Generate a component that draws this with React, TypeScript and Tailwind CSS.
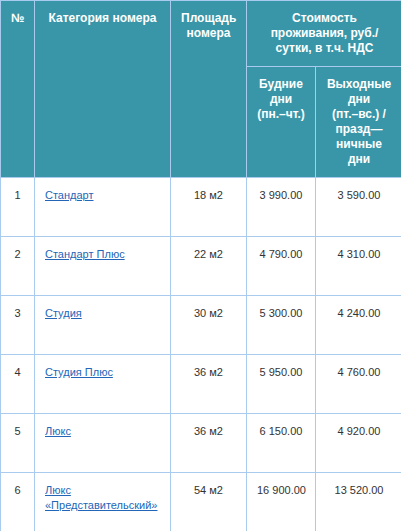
const rows = [
  { n: 1, name: ["Стандарт"], area: "18 м2", weekday: "3 990.00", weekend: "3 590.00" },
  { n: 2, name: ["Стандарт Плюс"], area: "22 м2", weekday: "4 790.00", weekend: "4 310.00" },
  { n: 3, name: ["Студия"], area: "30 м2", weekday: "5 300.00", weekend: "4 240.00" },
  { n: 4, name: ["Студия Плюс"], area: "36 м2", weekday: "5 950.00", weekend: "4 760.00" },
  { n: 5, name: ["Люкс"], area: "36 м2", weekday: "6 150.00", weekend: "4 920.00" },
  { n: 6, name: ["Люкс", "«Представительский»"], area: "54 м2", weekday: "16 900.00", weekend: "13 520.00" },
];

const th = "border border-[#a9cbee] bg-[#3996a8] px-[10px] py-[10px] align-top text-center font-bold text-white text-[12px] leading-[15px]";
const td = "border border-[#a9cbee] px-[10px] pt-[10px] align-top text-[11px] leading-[15px] text-[#333]";

export default function App() {
  return (
    <div className="w-[401px] h-[531px] overflow-hidden bg-white font-['Liberation_Sans',Arial,sans-serif]">
      <table className="w-[402px] table-fixed border-collapse">
        <colgroup>
          <col className="w-[34px]" />
          <col className="w-[136px]" />
          <col className="w-[76px]" />
          <col className="w-[69px]" />
          <col className="w-[87px]" />
        </colgroup>
        <thead>
          <tr className="h-[66px]">
            <th rowSpan={2} className={th}>№</th>
            <th rowSpan={2} className={th}>Категория номера</th>
            <th rowSpan={2} className={th}>Площадь номера</th>
            <th colSpan={2} className={th}>
              Стоимость<br />проживания, руб./<br />сутки, в т.ч. НДС
            </th>
          </tr>
          <tr className="h-[111px]">
            <th className={th}>
              Будние<br />дни<br />(пн.–чт.)
            </th>
            <th className={th}>
              Выходные<br />дни<br />(пт.–вс.) /<br />празд—<br />ничные<br />дни
            </th>
          </tr>
        </thead>
        <tbody>
          {rows.map((r) => (
            <tr key={r.n} className="h-[59px]">
              <td className={`${td} text-center`}>{r.n}</td>
              <td className={td}>
                <a href="#" className="text-[#2366b8] underline">
                  {r.name.map((part, i) => (
                    <span key={i}>
                      {i > 0 && <br />}
                      {part}
                    </span>
                  ))}
                </a>
              </td>
              <td className={`${td} text-center whitespace-nowrap`}>{r.area}</td>
              <td className={`${td} px-0 text-center whitespace-nowrap`}>{r.weekday}</td>
              <td className={`${td} px-0 text-center whitespace-nowrap`}>{r.weekend}</td>
            </tr>
          ))}
        </tbody>
      </table>
    </div>
  );
}
